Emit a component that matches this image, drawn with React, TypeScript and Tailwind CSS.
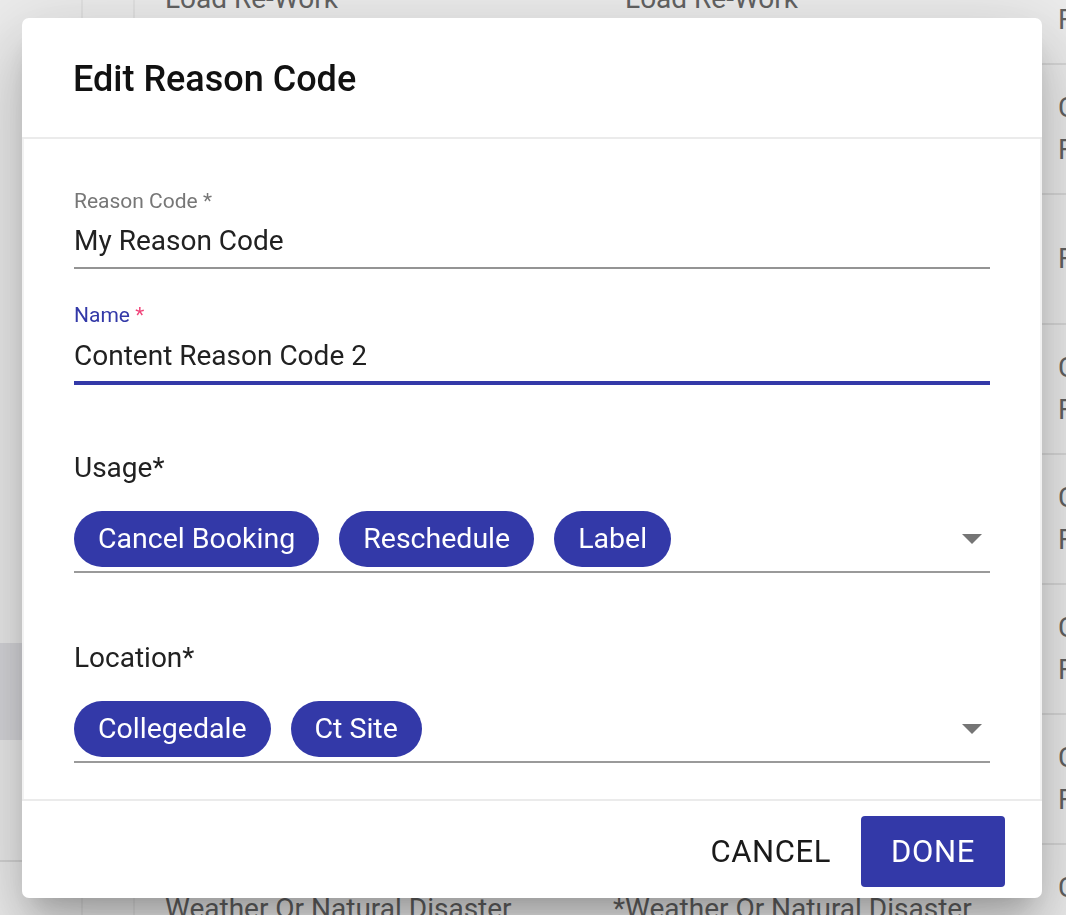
import React from "react";

type Row = { name: string; desc: string; usage: string[] };

// only the first and last rows show past the dialog, so the middle ones keep no name
const rows: Row[] = [
    { name: "Load Re-Work", desc: "*Load Re-Work", usage: ["Cancel Booking", "Full Reschedule"] },
    { name: "", desc: "", usage: ["Cancel Booking", "Full Reschedule"] },
    { name: "", desc: "", usage: ["Full Reschedule"] },
    { name: "", desc: "", usage: ["Cancel Booking", "Full Reschedule"] },
    { name: "", desc: "", usage: ["Cancel Booking", "Full Reschedule"] },
    { name: "", desc: "", usage: ["Cancel Booking", "Full Reschedule"] },
    { name: "", desc: "", usage: ["Cancel Booking", "Full Reschedule"] },
    { name: "Weather Or Natural Disaster", desc: "*Weather Or Natural Disaster", usage: ["Cancel Booking", "Full Reschedule"] },
];

const font = { fontFamily: "Roboto, 'Noto Sans', sans-serif" };

function Chip({ label }: { label: string }) {
    return (
        <span className="flex h-[56px] items-center rounded-full bg-[#3339a8] px-[24px] text-[28.5px] leading-[28px] text-white">
            {label}
        </span>
    );
}

function Arrow() {
    return (
        <svg width="20" height="10" viewBox="0 0 20 10" className="mr-[8px] ml-auto shrink-0">
            <path d="M0 0 L20 0 L10 10 Z" fill="#757575" />
        </svg>
    );
}

function ChipSelect({ label, chips }: { label: string; chips: string[] }) {
    return (
        <div>
            <div className="h-[28px] text-[28px] leading-[28px] text-[#212121]">{label}</div>
            <div className="mt-[29px] flex items-center gap-[20px] border-b-2 border-[#9a9a9a] pb-[4px]">
                {chips.map((c) => (
                    <Chip key={c} label={c} />
                ))}
                <Arrow />
            </div>
        </div>
    );
}

function Background() {
    return (
        <div className="flex h-[915px] w-full overflow-hidden bg-[#ededed] text-[#626262]">
            <div className="flex w-[83px] shrink-0 flex-col border-r-2 border-[#e2e2e2]">
                <div className="h-[643px]" />
                <div className="h-[97px] bg-[#d8d8dc]" />
                <div className="h-[122px] border-b-2 border-[#d6d6d6]" />
            </div>
            <div className="-mt-[65px] flex-1">
                {rows.map((r, i) => (
                    <div key={i} className="flex h-[130px] border-b-2 border-[#d9d9d9] text-[28px]">
                        <div className="w-[52px] shrink-0 border-r-2 border-[#e2e2e2]" />
                        <div className="flex w-[446px] shrink-0 items-center pl-[30px] whitespace-nowrap">{r.name}</div>
                        <div className="flex w-[445px] shrink-0 items-center pl-[32px] whitespace-nowrap">{r.desc}</div>
                        <div className="flex flex-1 flex-col justify-center pl-[32px] leading-[42px] whitespace-nowrap">
                            {r.usage.map((u) => (
                                <div key={u}>{u}</div>
                            ))}
                        </div>
                    </div>
                ))}
            </div>
        </div>
    );
}

export default function App() {
    return (
        <div className="relative h-[915px] w-full overflow-hidden" style={font}>
            <Background />
            <div className="fixed inset-0 flex items-center justify-center pr-[2px]">
                <div className="flex h-[880px] w-[1020px] flex-col overflow-hidden rounded-[7px] bg-white shadow-[0_19px_26px_-12px_rgba(0,0,0,0.2),0_42px_66px_5px_rgba(0,0,0,0.14),0_16px_80px_14px_rgba(0,0,0,0.12)]">
                    <div className="h-[121px] shrink-0 border-b-2 border-[#ebebeb] pt-[43px] pl-[51px]">
                        <h2 className="text-[36px] leading-[36px] font-medium text-[#111111]">Edit Reason Code</h2>
                    </div>

                    <div className="flex-1 border-x-2 border-[#f2f2f2] px-[50px] pt-[52px]">
                        <div>
                            <div className="h-[21px] text-[21px] leading-[21px] text-[#777777]">Reason Code *</div>
                            <div className="mt-[15px] border-b-2 border-[#949494] pb-[12px]">
                                <div className="h-[28px] text-[28px] leading-[28px] text-[#212121]">My Reason Code</div>
                            </div>
                        </div>

                        <div className="mt-[36px]">
                            <div className="h-[21px] text-[21px] leading-[21px] text-[#3339a8]">
                                Name <span className="text-[#f0457a]">*</span>
                            </div>
                            <div className="mt-[16px] border-b-4 border-[#3339a8] pb-[11px]">
                                <div className="h-[28px] text-[28px] leading-[28px] text-[#212121]">Content Reason Code 2</div>
                            </div>
                        </div>

                        <div className="mt-[69px]">
                            <ChipSelect label="Usage*" chips={["Cancel Booking", "Reschedule", "Label"]} />
                        </div>

                        <div className="mt-[71px]">
                            <ChipSelect label="Location*" chips={["Collegedale", "Ct Site"]} />
                        </div>
                    </div>

                    <div className="flex h-[99px] shrink-0 items-start justify-end border-t-2 border-[#ebebeb] pt-[15px] pr-[37px]">
                        <button className="mt-[20px] mr-[30px] text-[31px] leading-[31px] tracking-[0.02em] text-[#1a1a1a]">
                            CANCEL
                        </button>
                        <button className="flex h-[71px] items-center rounded-[4px] bg-[#3339a8] px-[30px] text-[31px] leading-[31px] tracking-[0.02em] text-white">
                            DONE
                        </button>
                    </div>
                </div>
            </div>
        </div>
    );
}
